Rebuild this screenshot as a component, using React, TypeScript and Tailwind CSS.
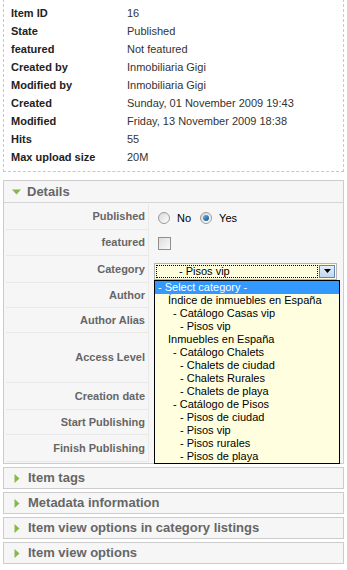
import React from "react";

const info = [
  ["Item ID", "16"],
  ["State", "Published"],
  ["featured", "Not featured"],
  ["Created by", "Inmobiliaria Gigi"],
  ["Modified by", "Inmobiliaria Gigi"],
  ["Created", "Sunday, 01 November 2009 19:43"],
  ["Modified", "Friday, 13 November 2009 18:38"],
  ["Hits", "55"],
  ["Max upload size", "20M"],
];

// category tree shown in the open select
const categories: [string, number][] = [
  ["Índice de inmuebles en España", 10],
  ["- Catálogo Casas vip", 15],
  ["- Pisos vip", 22],
  ["Inmuebles en España", 10],
  ["- Catálogo Chalets", 15],
  ["- Chalets de ciudad", 22],
  ["- Chalets Rurales", 22],
  ["- Chalets de playa", 22],
  ["- Catálogo de Pisos", 15],
  ["- Pisos de ciudad", 22],
  ["- Pisos vip", 22],
  ["- Pisos rurales", 22],
  ["- Pisos de playa", 22],
];

const Triangle = ({ open }: { open?: boolean }) =>
  open ? (
    <svg width="9" height="6" viewBox="0 0 9 6" className="shrink-0">
      <path d="M0 0.5h9L4.5 5.5z" fill="#86b84a" />
    </svg>
  ) : (
    <svg width="6" height="9" viewBox="0 0 6 9" className="shrink-0">
      <path d="M0.5 0v9L5.5 4.5z" fill="#86b84a" />
    </svg>
  );

const Radio = ({ checked }: { checked?: boolean }) => (
  <span className="inline-flex h-[12px] w-[12px] items-center justify-center rounded-full border border-[#9a9a9a] bg-gradient-to-br from-[#d8d8d8] to-[#ffffff]">
    {checked && (
      <span className="h-[6px] w-[6px] rounded-full bg-gradient-to-br from-[#6fb6e8] to-[#0d4f86]" />
    )}
  </span>
);

const FormRow = ({
  label,
  h,
  children,
}: {
  label: string;
  h: string;
  children?: React.ReactNode;
}) => (
  <div className={`flex ${h}`}>
    <div className="flex w-[143px] shrink-0 items-center justify-end border-r border-b border-[#e9e9e9] bg-[#f6f6f6] pr-[3px] text-[11px] font-bold text-[#666]">
      {label}
    </div>
    <div className="flex flex-1 items-center pl-[5px]">{children}</div>
  </div>
);

const CollapsedPanel = ({ title }: { title: string }) => (
  <div className="mx-[3px] mt-[3px] flex h-[22px] items-center gap-[8px] border border-[#cccccc] bg-[#f6f6f6] pl-[10px] text-[13px] font-bold text-[#666]">
    <Triangle />
    <span>{title}</span>
  </div>
);

export default function App() {
  return (
    <div className="min-h-[570px] w-[347px] overflow-hidden bg-white font-['Liberation_Sans',Arial,sans-serif]">
      {/* item info */}
      <div className="mx-[3px] -mt-[1px] border border-dashed border-[#c8c8c8] pt-[4px] pb-[5px] pl-[7px] text-[11px]">
        {info.map(([k, v]) => (
          <div key={k} className="flex h-[18px] items-center">
            <span className="w-[116px] font-bold text-[#222]">{k}</span>
            <span className="text-[#333]">{v}</span>
          </div>
        ))}
      </div>

      {/* Details panel */}
      <div className="mx-[3px] mt-[8px] border border-[#cccccc] bg-[#f6f6f6]">
        <div className="flex h-[22px] items-center gap-[6px] border-b border-[#d4d4d4] pl-[8px] text-[13px] font-bold text-[#666]">
          <Triangle open />
          <span>Details</span>
        </div>
        <div className="pl-[2px] pt-[1px] pb-[1px]">
          <FormRow label="Published" h="h-[26px]">
            <div className="ml-[4px] flex items-center pt-[2px] text-[11px] text-black">
              <Radio />
              <span className="ml-[7px] mr-[9px]">No</span>
              <Radio checked />
              <span className="ml-[7px]">Yes</span>
            </div>
          </FormRow>
          <FormRow label="featured" h="h-[26px]">
            <span className="ml-[4px] h-[13px] w-[13px] border border-[#8f8f8f] bg-gradient-to-br from-[#dcdcdc] to-[#fbfbfb]" />
          </FormRow>
          <FormRow label="Category" h="h-[27px]">
            <div className="relative mt-[3px]">
              <div className="flex h-[17px] w-[183px] items-stretch border border-[#b4b4b4] bg-[#ffffdd] p-[1px]">
                <div className="flex flex-1 items-center border border-dotted border-black pl-[22px] text-[11px] text-black">
                  - Pisos vip
                </div>
                <div className="ml-[1px] flex w-[16px] items-center justify-center border border-[#5b88b8] bg-gradient-to-b from-[#e4eef9] to-[#c3d6ee]">
                  <svg width="7" height="4" viewBox="0 0 7 4">
                    <path d="M0 0h7L3.5 4z" fill="#000" />
                  </svg>
                </div>
              </div>
              {/* open dropdown list */}
              <div className="absolute top-full left-0 z-10 w-[186px] border border-black bg-[#ffffe0] text-[11px] leading-[13px] text-black">
                <div className="bg-[#3399ff] pl-[3px] text-white">- Select category -</div>
                {categories.map(([c, pad], i) => (
                  <div key={i} className={pad === 10 ? "pl-[13px]" : pad === 15 ? "pl-[18px]" : "pl-[25px]"}>
                    {c}
                  </div>
                ))}
              </div>
            </div>
          </FormRow>
          <FormRow label="Author" h="h-[25px]" />
          <FormRow label="Author Alias" h="h-[25px]" />
          <FormRow label="Access Level" h="h-[50px]" />
          <FormRow label="Creation date" h="h-[27px]" />
          <FormRow label="Start Publishing" h="h-[25px]" />
          <FormRow label="Finish Publishing" h="h-[27px]" />
        </div>
      </div>

      <CollapsedPanel title="Item tags" />
      <CollapsedPanel title="Metadata information" />
      <CollapsedPanel title="Item view options in category listings" />
      <CollapsedPanel title="Item view options" />
    </div>
  );
}
